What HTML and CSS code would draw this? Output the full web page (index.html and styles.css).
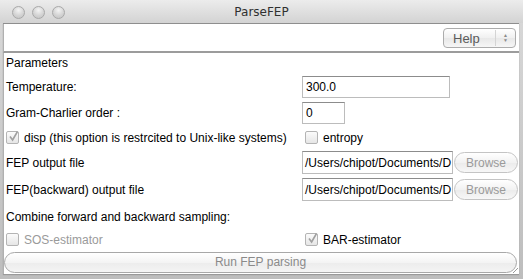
FILE: index.html
```html
<!DOCTYPE html>
<html>
<head>
<meta charset="utf-8">
<link rel="stylesheet" href="styles.css">
<title>ParseFEP</title>
</head>
<body>
<div class="window">
  <div class="titlebar">
    <div class="lights">
      <span class="light"></span><span class="light"></span><span class="light"></span>
    </div>
    <div class="title">ParseFEP</div>
  </div>
  <div class="frame">
    <div class="toolbar">
      <div class="popup">
        <span class="popup-label">Help</span>
        <span class="popup-arrows"><span class="up">&#9650;</span><span class="down">&#9660;</span></span>
      </div>
    </div>
    <div class="content">
      <div class="row r-head"><span class="label">Parameters</span></div>
      <div class="row r-temp">
        <span class="label col-label">Temperature:</span>
        <span class="entry entry-wide">300.0</span>
      </div>
      <div class="row r-gram">
        <span class="label col-label">Gram-Charlier order :</span>
        <span class="entry entry-small">0</span>
      </div>
      <div class="row r-disp">
        <span class="check-wrap col-label">
          <span class="checkbox checked"><svg viewBox="0 0 13 13" width="13" height="13"><path d="M3 6.5 L5.6 10 L10.5 1.5" fill="none" stroke="#a0a0a0" stroke-width="1.6"/></svg></span>
          <span class="label">disp (this option is restrcited to Unix-like systems)</span>
        </span>
        <span class="check-wrap right-check">
          <span class="checkbox"></span>
          <span class="label">entropy</span>
        </span>
      </div>
      <div class="row r-file">
        <span class="label col-label">FEP output file</span>
        <span class="entry entry-file">/Users/chipot/Documents/D</span>
        <span class="browse">Browse</span>
      </div>
      <div class="row r-file2">
        <span class="label col-label">FEP(backward) output file</span>
        <span class="entry entry-file">/Users/chipot/Documents/D</span>
        <span class="browse">Browse</span>
      </div>
      <div class="row r-comb"><span class="label">Combine forward and backward sampling:</span></div>
      <div class="row r-est">
        <span class="check-wrap col-label">
          <span class="checkbox"></span>
          <span class="label disabled">SOS-estimator</span>
        </span>
        <span class="check-wrap right-check">
          <span class="checkbox checked"><svg viewBox="0 0 13 13" width="13" height="13"><path d="M3 6.5 L5.6 10 L10.5 1.5" fill="none" stroke="#a0a0a0" stroke-width="1.6"/></svg></span>
          <span class="label">BAR-estimator</span>
        </span>
      </div>
      <div class="row r-run">
        <div class="runbtn">Run FEP parsing</div>
      </div>
      <span class="grip"></span>
    </div>
  </div>
</div>
</body>
</html>
```
FILE: styles.css
```css
html, body {
  margin: 0;
  padding: 0;
  background: #ffffff;
}
body {
  font-family: "Liberation Sans", Arial, sans-serif;
  font-size: 12px;
  color: #000;
}
.window {
  width: 523px;
  height: 279px;
  display: flex;
  flex-direction: column;
  background: linear-gradient(#d9d9d9, #bdbdbd);
  overflow: hidden;
}
.titlebar {
  height: 23px;
  flex: none;
  position: relative;
  background: linear-gradient(#ececec, #d3d3d3);
  display: flex;
  align-items: center;
  justify-content: center;
}
.lights {
  position: absolute;
  left: 12px;
  top: 6px;
  display: flex;
  gap: 7px;
}
.light {
  width: 13px;
  height: 13px;
  border-radius: 50%;
  box-sizing: border-box;
  border: 1px solid #a9a9a9;
  background: radial-gradient(circle at 50% 30%, #f4f4f4 0%, #d4d4d4 55%, #c2c2c2 100%);
}
.title {
  font-family: "DejaVu Sans", sans-serif;
  font-size: 12px;
  color: #303030;
  padding-top: 1px;
}
.frame {
  flex: 1;
  margin: 0 4px 5px 3px;
  display: flex;
  flex-direction: column;
  border-top: 1px solid #8e8e8e;
  background: #fff;
  box-shadow: 0 1px 1px #9a9a9a;
}
.toolbar {
  flex: none;
  border-bottom: 2px solid #9c9c9c;
  border-left: 1px solid #b0b0b0;
  display: flex;
  justify-content: flex-end;
  align-items: flex-start;
  padding-right: 3px;
  box-sizing: border-box;
  height: 29px;
}
.popup {
  margin-top: 4px;
  width: 73px;
  height: 20px;
  box-sizing: border-box;
  border: 1px solid #acacac;
  border-radius: 4px;
  background: linear-gradient(#ffffff, #f0f0f0 50%, #e8e8e8 51%, #f6f6f6);
  display: flex;
  align-items: center;
  font-size: 13px;
}
.popup-label {
  flex: 1;
  padding-left: 9px;
  color: #5a5a5a;
}
.popup-arrows {
  width: 19px;
  height: 16px;
  border-left: 1px solid #d4d4d4;
  display: flex;
  flex-direction: column;
  align-items: center;
  justify-content: center;
  font-size: 5px;
  line-height: 5px;
  color: #8a8a8a;
}
.content {
  flex: 1;
  position: relative;
  border-left: 1px solid #b0b0b0;
  padding-left: 2px;
}
.row {
  display: flex;
  align-items: center;
}
.col-label {
  width: 296px;
  flex: none;
  display: flex;
  align-items: center;
}
.r-head { height: 20px; }
.r-temp { height: 26px; margin-top: 1px; }
.r-gram { height: 25px; }
.r-disp { height: 25px; }
.r-file { height: 25px; }
.r-file2 { height: 29px; }
.r-comb { height: 25px; }
.r-est { height: 21px; }
.r-run { height: 22px; margin-top: 1px; margin-left: -2px; }
.entry {
  height: 22px;
  box-sizing: border-box;
  border: 1px solid #bcbcbc;
  border-top-color: #8c8c8c;
  display: flex;
  align-items: center;
  padding-left: 3px;
  overflow: hidden;
  white-space: nowrap;
  font-size: 12px;
}
.entry-wide { width: 148px; }
.entry-small { width: 43px; height: 22px; }
.entry-file { width: 151px; height: 23px; padding-left: 2px; }
.browse {
  margin-left: 1px;
  width: 64px;
  height: 21px;
  box-sizing: border-box;
  border: 1px solid #c4c4c4;
  border-radius: 11px;
  background: linear-gradient(#ffffff, #f2f2f2 50%, #ebebeb 51%, #f7f7f7);
  color: #9a9a9a;
  display: flex;
  align-items: center;
  justify-content: center;
  font-size: 12px;
}
.check-wrap {
  display: flex;
  align-items: center;
  gap: 5px;
}
.right-check { margin-left: 3px; }
.checkbox {
  width: 13px;
  height: 13px;
  box-sizing: border-box;
  border: 1px solid #b4b4b4;
  border-radius: 2px;
  background: linear-gradient(#fbfbfb, #e6e6e6);
  position: relative;
  flex: none;
}
.checkbox svg {
  position: absolute;
  left: 0px;
  top: -2px;
}
.disabled { color: #9a9a9a; }
.runbtn {
  width: 513px;
  height: 21px;
  box-sizing: border-box;
  border: 1px solid #a8a8a8;
  border-radius: 11px;
  background: linear-gradient(#ffffff, #f4f4f4 50%, #ececec 51%, #f4f4f4);
  color: #8a8a8a;
  display: flex;
  align-items: center;
  justify-content: center;
  font-size: 12px;
}
.grip {
  position: absolute;
  right: 1px;
  bottom: 1px;
  width: 10px;
  height: 10px;
  background: repeating-linear-gradient(135deg, transparent 0 2px, #9a9a9a 2px 3px, transparent 3px 4px);
  clip-path: polygon(100% 0, 100% 100%, 0 100%);
}
```
